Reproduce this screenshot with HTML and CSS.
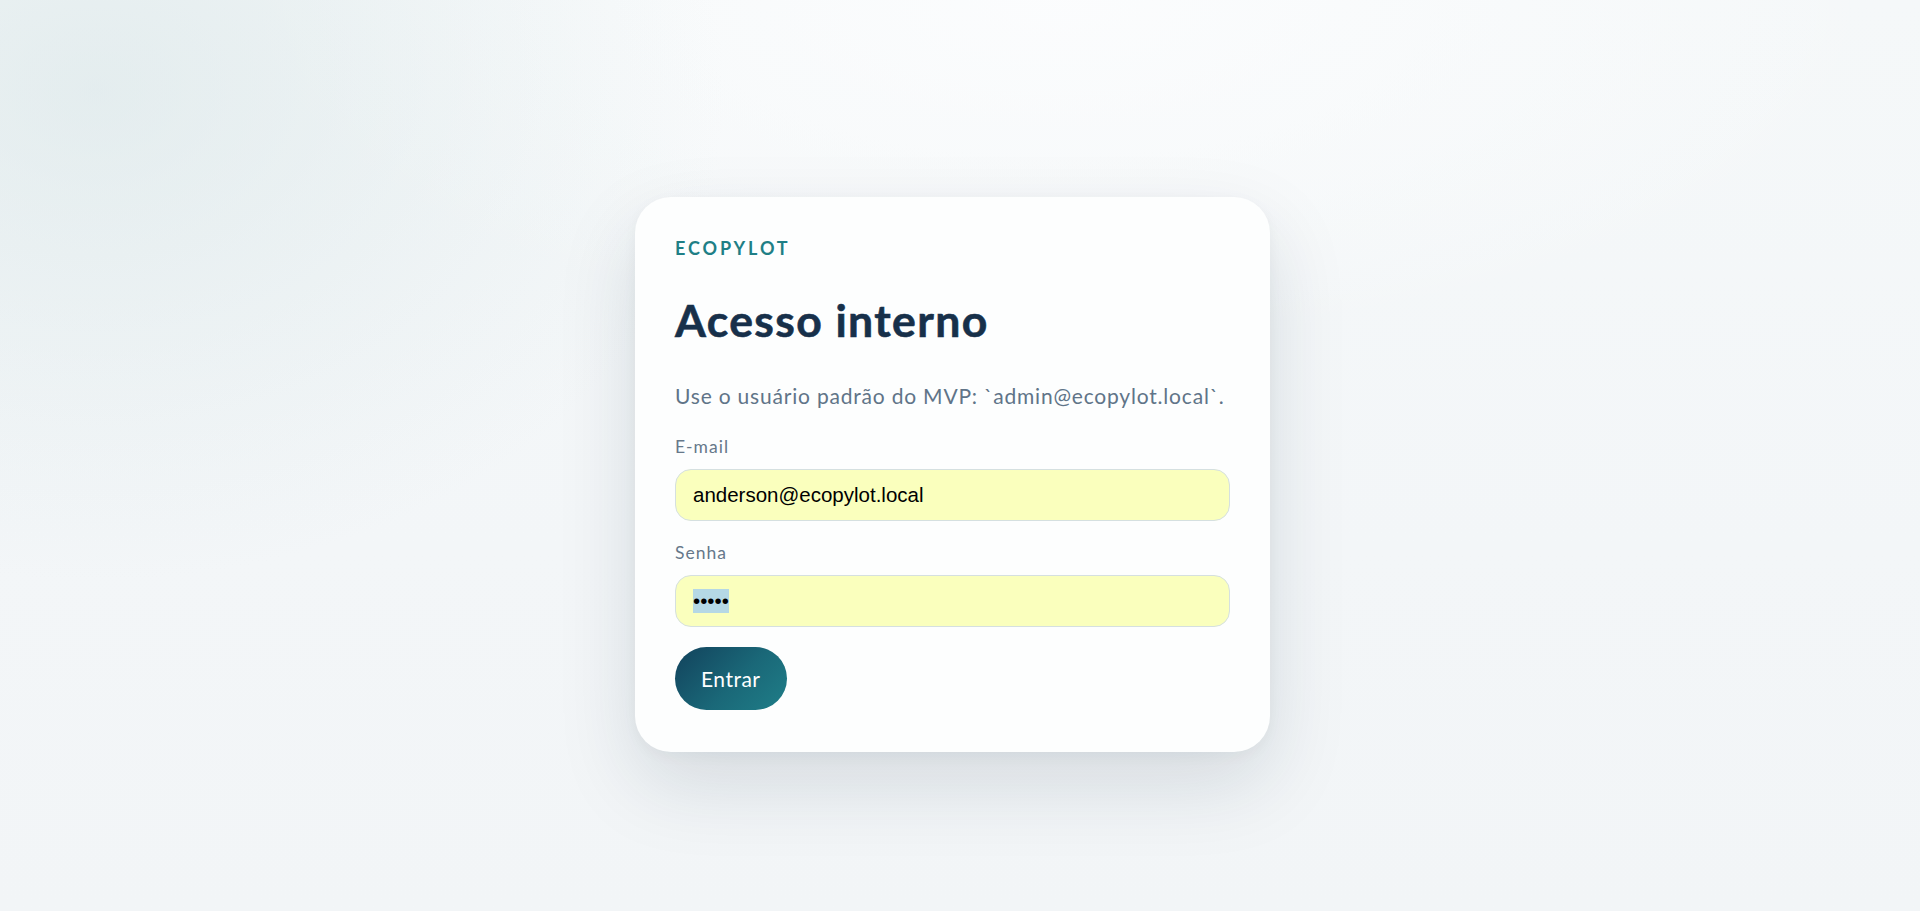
FILE: index.html
```html
<!DOCTYPE html>
<html lang="pt-BR">
<head>
<meta charset="utf-8">
<title>Ecopylot — Acesso interno</title>
<link rel="stylesheet" href="styles.css">
</head>
<body>
<main class="page">
  <section class="card">
    <p class="brand">ECOPYLOT</p>
    <h1 class="title">Acesso interno</h1>
    <p class="hint">Use o usuário padrão do MVP: `admin@ecopylot.local`.</p>
    <form class="form">
      <div class="field">
        <label class="label" for="email">E-mail</label>
        <input class="input" id="email" type="email" value="anderson@ecopylot.local">
      </div>
      <div class="field">
        <label class="label" for="senha">Senha</label>
        <input class="input" id="senha" type="password" value="12345">
      </div>
      <div class="actions">
        <button class="button" type="submit">Entrar</button>
      </div>
    </form>
  </section>
</main>
<script src="script.js"></script>
</body>
</html>
```

FILE: styles.css
```css
* { box-sizing: border-box; }

html, body {
  margin: 0;
  height: 100%;
}

body {
  font-family: Lato, "Noto Sans", sans-serif;
  background:
    radial-gradient(ellipse 900px 700px at 5% 10%, rgba(214, 228, 230, 0.55), rgba(214, 228, 230, 0) 70%),
    radial-gradient(ellipse 1200px 500px at 55% 0%, rgba(252, 253, 254, 0.9), rgba(252, 253, 254, 0) 70%),
    linear-gradient(180deg, #f5f8f9 0%, #f3f6f8 60%, #f2f5f7 100%);
  color: #17304a;
}

.page {
  min-height: 100vh;
  padding: 37px 15px 0 0;
  display: grid;
  place-items: center;
}

.card {
  width: 635px;
  padding: 40px 40px 42px;
  background: #fdfefe;
  border-radius: 36px;
  box-shadow: 0 32px 80px rgba(18, 40, 60, 0.13), 0 4px 14px rgba(18, 40, 60, 0.04);
}

.brand {
  margin: 0 0 37px;
  font-size: 18px;
  line-height: 22px;
  font-weight: 700;
  letter-spacing: 0.16em;
  color: #1f7f86;
}

.title {
  margin: 0 0 37px;
  font-size: 44.5px;
  line-height: 48px;
  font-weight: 700;
  letter-spacing: 1.4px;
  -webkit-text-stroke: 0.6px #17304a;
  color: #17304a;
}

.hint {
  margin: 0 0 24px;
  font-size: 21px;
  line-height: 30px;
  letter-spacing: 0.8px;
  color: #607488;
}

.form {
  display: flex;
  flex-direction: column;
  gap: 20px;
}

.field {
  display: flex;
  flex-direction: column;
  gap: 10px;
}

.label {
  font-size: 17.5px;
  line-height: 24px;
  letter-spacing: 1px;
  color: #66788a;
}

.input {
  height: 52px;
  width: 100%;
  padding: 0 17px;
  border: 1px solid #d5e0e0;
  border-radius: 16px;
  background: #faffbd;
  font-family: "Liberation Sans", Arial, sans-serif;
  font-size: 20.5px;
  color: #000;
}

.input:focus {
  outline: none;
  border-color: #d5e0e0;
}

.input::selection {
  background: #b5d8e5;
  color: #000;
}

.actions {
  display: flex;
}

.button {
  height: 63px;
  padding: 0 26px;
  border: none;
  border-radius: 999px;
  background: linear-gradient(135deg, #12425c 0%, #1a6878 55%, #1f7e88 100%);
  color: #ffffff;
  font-family: Lato, "Noto Sans", sans-serif;
  font-size: 21px;
  letter-spacing: 0.5px;
  cursor: pointer;
}
```

FILE: script.js
```js
window.addEventListener('DOMContentLoaded', function () {
  var senha = document.getElementById('senha');
  senha.focus();
  senha.select();
});
```
